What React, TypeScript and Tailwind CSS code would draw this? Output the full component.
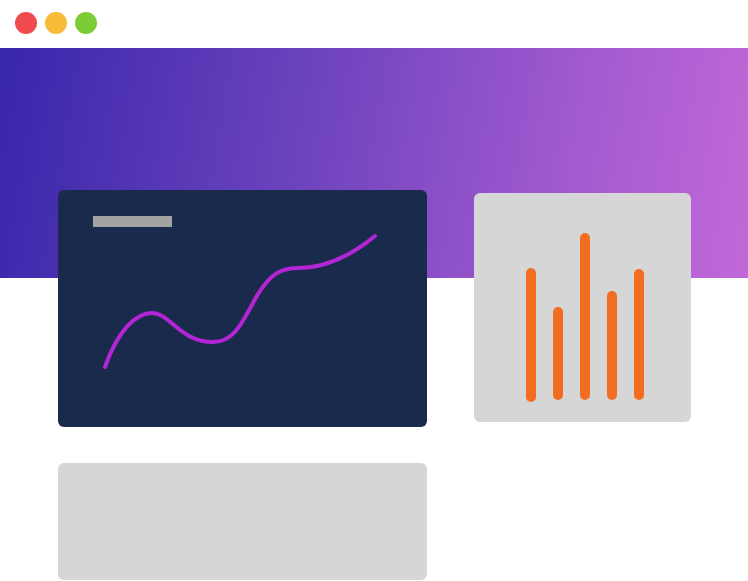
export default function App() {
  const bars = [
    { h: 134, mt: 75 },
    { h: 93, mt: 114 },
    { h: 167, mt: 40 },
    { h: 109, mt: 98 },
    { h: 131, mt: 76 },
  ];
  return (
    <div className="w-[748px] h-[581px] overflow-hidden bg-white flex flex-col">
      <div className="h-12 shrink-0 flex items-center gap-2 pl-[15px] pb-[3px]">
        <div className="w-[22px] h-[22px] rounded-full bg-[#ef4b4f]" />
        <div className="w-[22px] h-[22px] rounded-full bg-[#f8bb37]" />
        <div className="w-[22px] h-[22px] rounded-full bg-[#7ccd35]" />
      </div>
      <div className="flex-1 bg-white bg-[linear-gradient(100deg,#3826ab_0%,#6c43bd_40%,#a25ad0_75%,#c168d8_100%)] bg-no-repeat bg-[length:100%_230px] pt-[142px] pl-[58px] flex gap-[47px]">
        <div className="w-[369px] flex flex-col gap-[36px]">
          <div className="relative h-[237px] rounded-[6px] bg-[#1a2a4c] pt-[26px] pl-[35px]">
            <div className="w-[79px] h-[11px] bg-[#a3a3a3]" />
            <svg className="absolute inset-0" width="369" height="237" viewBox="0 0 369 237" fill="none">
              <path
                d="M47 177 C 60 140, 78 123, 94 123 C 112 123, 122 152, 155 152 C 178 152, 186 128, 200 104 C 212 85, 222 78, 240 78 C 270 78, 295 64, 317 46"
                stroke="#b425d6"
                strokeWidth="4"
                strokeLinecap="round"
              />
            </svg>
          </div>
          <div className="h-[117px] rounded-[6px] bg-[#d6d6d6]" />
        </div>
        <div className="mt-[3px] w-[217px] h-[229px] rounded-[6px] bg-[#d6d6d6] flex pl-[52px] gap-[17px]">
          {bars.map((b, i) => (
            <div
              key={i}
              className="w-[10px] rounded-full bg-[#f26d1f]"
              style={{ height: b.h, marginTop: b.mt }}
            />
          ))}
        </div>
      </div>
    </div>
  );
}
